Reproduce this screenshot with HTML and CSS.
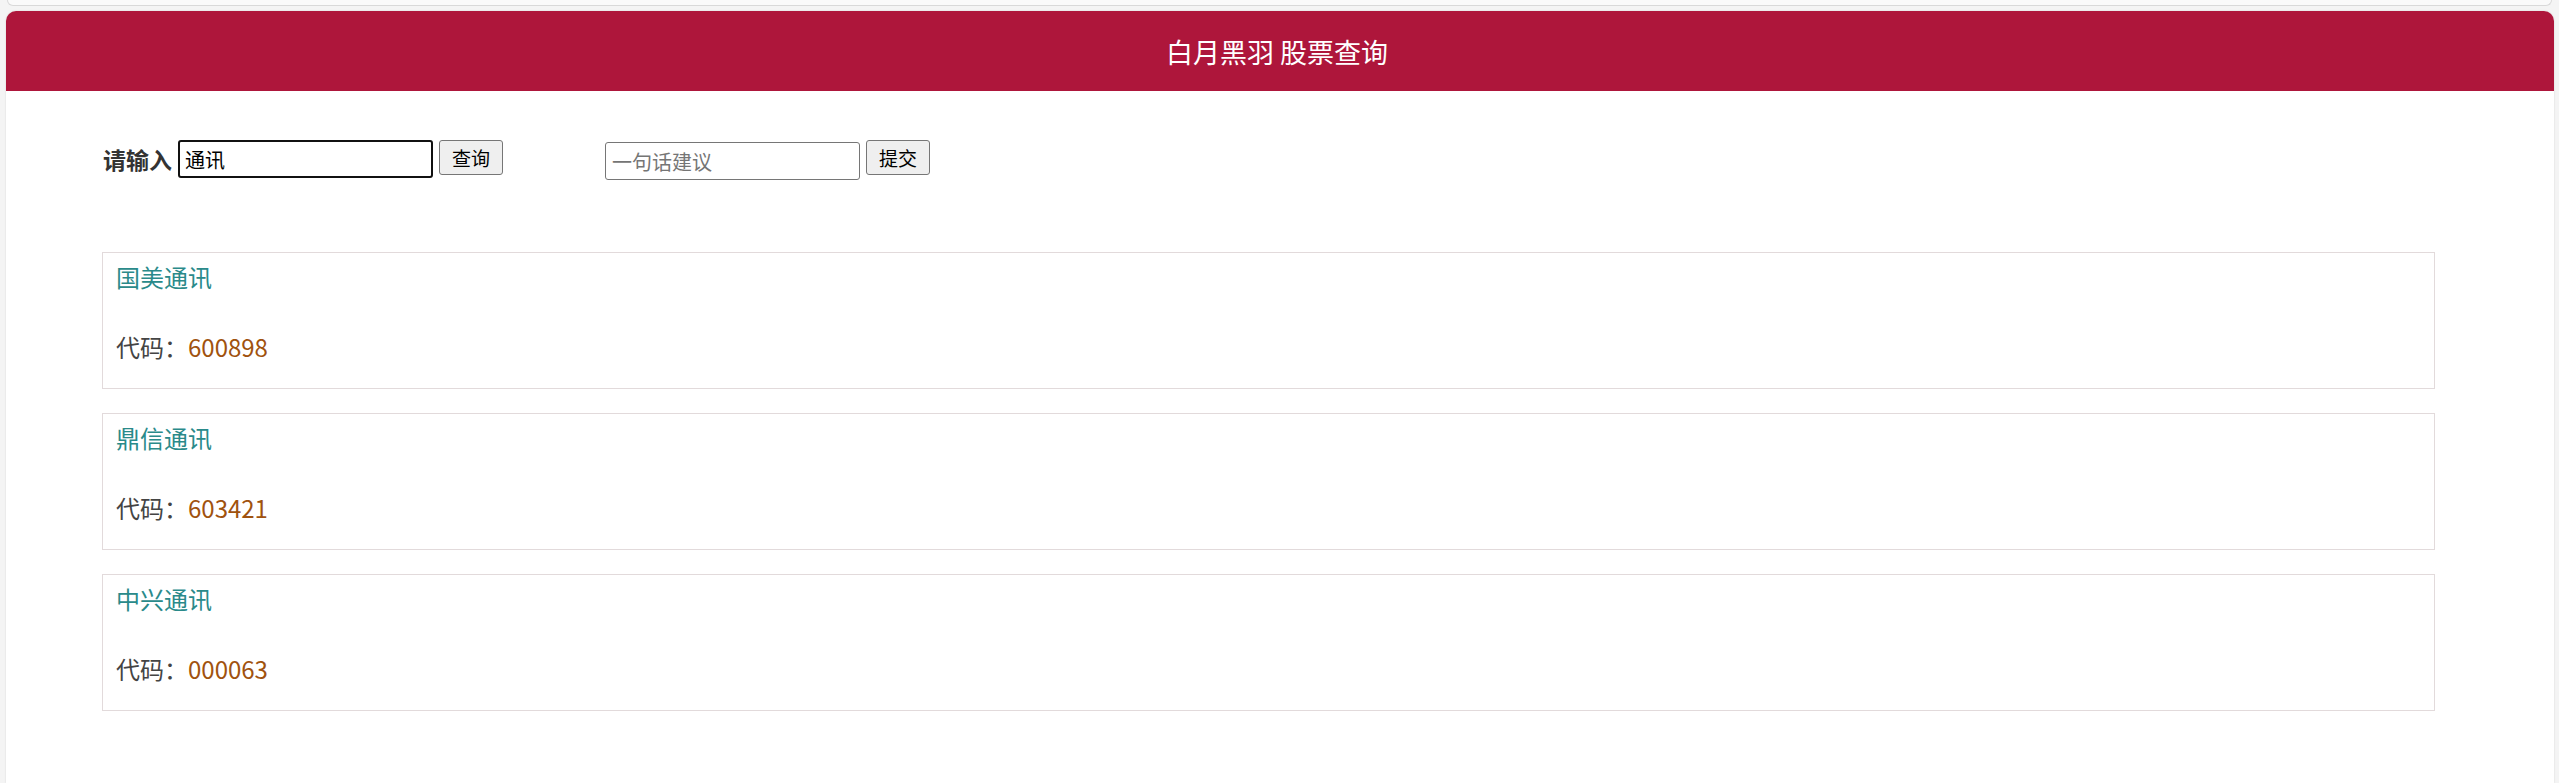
FILE: index.html
```html
<!DOCTYPE html>
<html lang="zh-CN">
<head>
<meta charset="utf-8">
<title>白月黑羽 股票查询</title>
<link rel="stylesheet" href="styles.css">
</head>
<body>
<div class="prev"></div>
<div class="page">
  <div class="header">白月黑羽 股票查询</div>
  <div class="content">
    <div class="toolbar">
      <label class="label">请输入</label>
      <input class="search" type="text" value="通讯">
      <button class="btn btn-query">查询</button>
      <input class="suggest" type="text" placeholder="一句话建议">
      <button class="btn btn-submit">提交</button>
    </div>
    <div class="results">
      <div class="card">
        <div class="name">国美通讯</div>
        <div class="code">代码：<span class="num">600898</span></div>
      </div>
      <div class="card">
        <div class="name">鼎信通讯</div>
        <div class="code">代码：<span class="num">603421</span></div>
      </div>
      <div class="card">
        <div class="name">中兴通讯</div>
        <div class="code">代码：<span class="num">000063</span></div>
      </div>
    </div>
  </div>
</div>
</body>
</html>
```
FILE: styles.css
```css
html, body {
  margin: 0;
  padding: 0;
}
body {
  background: #f4f4f4;
  font-family: "Noto Sans CJK SC", "Noto Sans", sans-serif;
  overflow: hidden;
  height: 783px;
}
.prev {
  margin: 0 7px;
  height: 5px;
  background: #fafafa;
  border: 1px solid #d9d9d9;
  border-top: 0;
  border-radius: 0 0 10px 10px;
}
.page {
  margin: 5px 5px 0 6px;
  background: #ffffff;
  border-radius: 10px 10px 0 0;
  box-shadow: 0 0 2px rgba(0, 0, 0, 0.14);
  min-height: 772px;
}
.header {
  height: 80px;
  background: #ae163b;
  color: #ffffff;
  font-size: 27px;
  border-radius: 10px 10px 0 0;
  display: flex;
  align-items: center;
  justify-content: center;
  padding-right: 6px;
}
.content {
  padding: 49px 119px 0 96px;
}
.toolbar {
  display: flex;
  align-items: flex-start;
}
.label {
  font-weight: bold;
  font-size: 23px;
  color: #333333;
  line-height: 38px;
  margin-left: 1px;
  margin-right: 6px;
}
.search, .suggest {
  box-sizing: border-box;
  height: 38px;
  font-family: "Noto Sans CJK SC", "Noto Sans", sans-serif;
  font-size: 20px;
  margin: 0;
  outline: none;
}
.search {
  width: 255px;
  border: 2px solid #111111;
  border-radius: 3px;
  padding: 0 5px;
  color: #000;
}
.suggest {
  width: 255px;
  border: 1px solid #767676;
  border-radius: 3px;
  padding: 0 6px;
  margin-top: 2px;
  margin-left: 102px;
}
.suggest::placeholder {
  color: #757575;
}
.btn {
  box-sizing: border-box;
  height: 35px;
  margin: 0 0 0 6px;
  padding: 0;
  background: #efefef;
  border: 1px solid #767676;
  border-radius: 3px;
  font-family: "Noto Sans CJK SC", "Noto Sans", sans-serif;
  font-size: 19px;
  color: #000;
}
.btn-query {
  width: 64px;
}
.btn-submit {
  width: 64px;
  margin-left: 6px;
}
.results {
  margin-top: 72px;
  display: flex;
  flex-direction: column;
  gap: 24px;
}
.card {
  border: 1px solid #e2dadb;
  padding: 8px 13px 25px;
  font-size: 24px;
  line-height: 32px;
}
.name {
  color: #2a8a8a;
  margin-bottom: 38px;
}
.code {
  color: #444444;
}
.num {
  color: #a0520e;
}
```
